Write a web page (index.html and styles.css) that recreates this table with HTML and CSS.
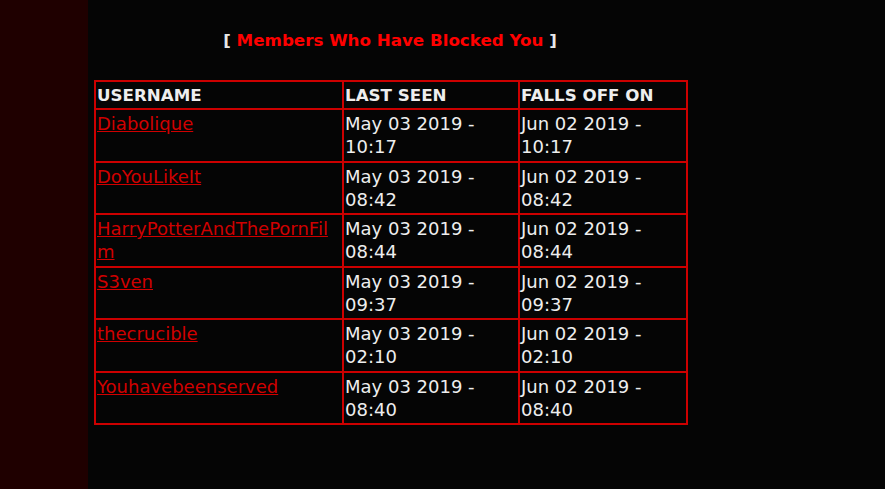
FILE: index.html
```html
<!DOCTYPE html>
<html>
<head>
<meta charset="utf-8">
<link rel="stylesheet" href="styles.css">
</head>
<body>
<div class="page">
  <div class="sidebar"></div>
  <div class="main">
    <div class="content">
      <div class="title"><span class="br">[</span> <span class="red">Members Who Have Blocked You</span> <span class="br">]</span></div>
      <table class="list">
        <colgroup><col class="c1"><col class="c2"><col class="c3"></colgroup>
        <tr class="head"><th>USERNAME</th><th>LAST SEEN</th><th>FALLS OFF ON</th></tr>
        <tr><td><a href="#">Diabolique</a></td><td>May 03 2019 - 10:17</td><td>Jun 02 2019 - 10:17</td></tr>
        <tr><td><a href="#">DoYouLikeIt</a></td><td>May 03 2019 - 08:42</td><td>Jun 02 2019 - 08:42</td></tr>
        <tr><td><a href="#">HarryPotterAndThePornFilm</a></td><td>May 03 2019 - 08:44</td><td>Jun 02 2019 - 08:44</td></tr>
        <tr><td><a href="#">S3ven</a></td><td>May 03 2019 - 09:37</td><td>Jun 02 2019 - 09:37</td></tr>
        <tr><td><a href="#">thecrucible</a></td><td>May 03 2019 - 02:10</td><td>Jun 02 2019 - 02:10</td></tr>
        <tr><td><a href="#">Youhavebeenserved</a></td><td>May 03 2019 - 08:40</td><td>Jun 02 2019 - 08:40</td></tr>
      </table>
    </div>
  </div>
</div>
</body>
</html>
```
FILE: styles.css
```css
html, body {
  margin: 0;
  padding: 0;
  height: 100%;
  background: #050505;
}
body {
  font-family: "DejaVu Sans", Verdana, sans-serif;
  font-size: 18px;
  color: #eeeeee;
}
.page {
  display: flex;
  min-height: 489px;
}
.sidebar {
  width: 88px;
  flex: none;
  background: #1f0000;
}
.main {
  flex: 1;
  padding: 29px 0 0 6px;
}
.content {
  width: 592px;
}
.title {
  text-align: center;
  font-weight: bold;
  font-size: 16.7px;
  line-height: 23px;
  margin-bottom: 28px;
}
.title .br { color: #e8e8e8; }
.title .red { color: #ff0000; }
.list {
  border-collapse: collapse;
  width: 592px;
  table-layout: fixed;
}
.c1 { width: 248px; }
.c2 { width: 176px; }
.c3 { width: 168px; }
.list th, .list td {
  border: 2px solid #cc0000;
  padding: 2px 1px;
  text-align: left;
  vertical-align: top;
  line-height: 23.25px;
  overflow-wrap: anywhere;
}
.list th {
  font-weight: bold;
  font-size: 16.7px;
  line-height: 22px;
}
.list a {
  color: #d00000;
  text-decoration: underline;
}
```
